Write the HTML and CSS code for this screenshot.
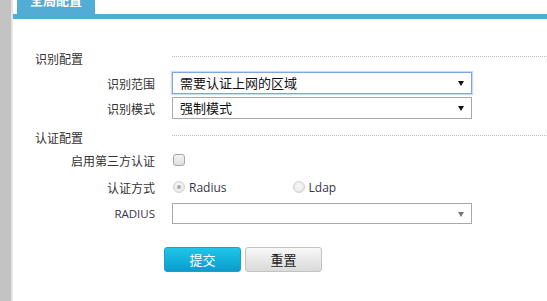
FILE: index.html
```html
<!DOCTYPE html>
<html lang="zh-CN">
<head>
  <meta charset="UTF-8" />
  <title>全局配置</title>
  <link rel="stylesheet" href="styles.css">
</head>
<body>

<div class="page">
  <div class="side"></div>

  <div class="main">
    <div class="tabbar">
      <div class="tab"><span>全局配置</span></div>
    </div>

    <form class="form">
      <div class="section">
        <span class="sec-title">识别配置</span>
        <i class="dots"></i>
      </div>

      <div class="row row-1">
        <label>识别范围</label>
        <div class="select focus">需要认证上网的区域<span class="arrow"></span></div>
      </div>

      <div class="row row-2">
        <label>识别模式</label>
        <div class="select">强制模式<span class="arrow"></span></div>
      </div>

      <div class="section section-2">
        <span class="sec-title">认证配置</span>
        <i class="dots"></i>
      </div>

      <div class="row row-check">
        <label>启用第三方认证</label>
        <div class="ctrl"><span class="checkbox"></span></div>
      </div>

      <div class="row row-radio">
        <label>认证方式</label>
        <div class="ctrl">
          <span class="radio checked"></span><span class="opt">Radius</span>
          <span class="radio second"></span><span class="opt">Ldap</span>
        </div>
      </div>

      <div class="row row-radius">
        <label class="latin">RADIUS</label>
        <div class="select empty"><span class="arrow grey"></span></div>
      </div>

      <div class="actions">
        <button type="button" class="btn btn-blue">提交</button>
        <button type="button" class="btn btn-grey">重置</button>
      </div>
    </form>
  </div>
</div>

</body>
</html>
```

FILE: styles.css
```css
* {
  box-sizing: border-box;
}

body {
  margin: 0;
  background: #fff;
  font-family: "Noto Sans CJK SC", "Noto Sans", sans-serif;
  color: #333;
  font-size: 12px;
}

.page {
  display: flex;
  height: 301px;
  overflow: hidden;
}

.side {
  width: 13px;
  flex: none;
  background: #c3c3c3;
  border-right: 2px solid #e4e4e4;
}

.main {
  flex: 1;
}

/* tab header */
.tabbar {
  height: 19px;
  border-bottom: 5px solid #52acd6;
  padding-left: 4px;
}

.tab {
  width: 78px;
  height: 14px;
  background: #52acd6;
  overflow: hidden;
  text-align: center;
  color: #fff;
  font-weight: bold;
  font-size: 13px;
  line-height: 14px;
}

.tab span {
  display: block;
  margin-top: -7px;
}

/* form */
.form {
  padding-top: 28px;
}

.section {
  display: grid;
  grid-template-columns: 159px 1fr;
  align-items: center;
  height: 22px;
}

.section-2 {
  margin-top: 7px;
}

.sec-title {
  padding-left: 22px;
  color: #333;
}

.dots {
  display: block;
  height: 0;
  border-top: 1px dotted #bdbdbd;
  margin-top: -4px;
}

.row {
  display: grid;
  grid-template-columns: 159px 300px;
  align-items: center;
  height: 22px;
}

.row label {
  text-align: right;
  padding-right: 17px;
}

.row label.latin {
  font-family: "Open Sans", "Noto Sans", sans-serif;
  font-size: 11.5px;
  color: #3a3448;
}

.row-1 { margin-top: 3px; }
.row-2 { margin-top: 3px; }
.row-check { margin-top: 1px; }
.row-radio { margin-top: 5px; }
.row-radius { margin-top: 4px; }

.select {
  position: relative;
  height: 22px;
  border: 1px solid #a9a9a9;
  background: #fff;
  padding-left: 7px;
  font-size: 13px;
  line-height: 20px;
  color: #111;
}

.select.focus {
  border-color: #7ea6e0;
  box-shadow: 0 0 1px 1px #c9dbf5;
}

.select.empty {
  height: 21px;
}

.arrow {
  position: absolute;
  right: 7px;
  top: 8px;
  width: 0;
  height: 0;
  border-left: 3px solid transparent;
  border-right: 3px solid transparent;
  border-top: 5px solid #111;
}

.arrow.grey {
  border-top-color: #777;
}

.ctrl {
  display: flex;
  align-items: center;
  padding-left: 1px;
}

.checkbox {
  width: 12px;
  height: 12px;
  border: 1px solid #a5a5a5;
  border-radius: 3px;
  background: linear-gradient(#f4f4f4, #dedede);
}

.radio {
  width: 12px;
  height: 12px;
  border-radius: 50%;
  border: 1px solid #d0d0d0;
  background: radial-gradient(circle at 50% 40%, #fafafa, #e2e2e2);
  position: relative;
}

.radio.checked::after {
  content: "";
  position: absolute;
  left: 3px;
  top: 3px;
  width: 4px;
  height: 4px;
  border-radius: 50%;
  background: #a8a8a8;
}

.radio.second {
  margin-left: 66px;
}

.opt {
  font-family: "Open Sans", "Noto Sans", sans-serif;
  font-size: 12px;
  color: #3a3448;
  margin-left: 4px;
}

/* buttons */
.actions {
  display: flex;
  gap: 4px;
  margin-top: 23px;
  padding-left: 151px;
}

.btn {
  width: 77px;
  height: 25px;
  border-radius: 3px;
  font-family: "Noto Sans CJK SC", sans-serif;
  font-size: 13px;
  padding: 0;
  cursor: pointer;
}

.btn-blue {
  color: #fff;
  border: 1px solid #1d9fcc;
  background: linear-gradient(#1fc6e8, #0b9ccd);
}

.btn-grey {
  color: #222;
  border: 1px solid #c2c2c2;
  background: linear-gradient(#f8f8f8, #dadada);
}
```
